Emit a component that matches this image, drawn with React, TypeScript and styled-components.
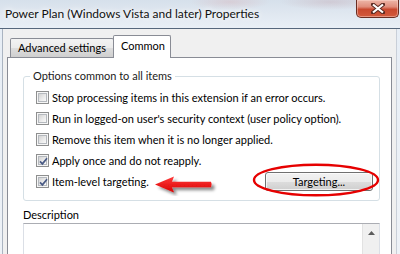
import styled, { createGlobalStyle } from 'styled-components';

const GlobalStyle = createGlobalStyle`
  html, body {
    margin: 0;
    padding: 0;
    background: #e9eef4;
  }
`;

const Window = styled.div`
  width: 400px;
  height: 254px;
  overflow: hidden;
  display: flex;
  flex-direction: column;
  font-family: Lato, 'Noto Sans', sans-serif;
  font-size: 11px;
  color: #000;
  background: linear-gradient(#e6edf5, #eef2f7);
`;

const TitleBar = styled.div`
  height: 28px;
  flex-shrink: 0;
  display: flex;
  align-items: flex-start;
  justify-content: space-between;
  background:
    radial-gradient(ellipse 40px 8px at 230px 2px, rgba(214, 170, 175, 0.35), transparent),
    radial-gradient(ellipse 50px 8px at 330px 2px, rgba(190, 150, 160, 0.3), transparent),
    linear-gradient(#d6e0eb 0%, #dfe7f0 45%, #e9eff6 100%);
  border-bottom: 1px solid #56677c;
`;

const Title = styled.div`
  padding: 6px 0 0 5px;
  font-size: 12px;
  color: #111;
  text-shadow: 0 0 5px #fff, 0 0 8px #fff;
  white-space: nowrap;
`;

const CloseButton = styled.div`
  width: 43px;
  height: 18px;
  margin-right: 1px;
  box-sizing: border-box;
  border: 1px solid #6a2d22;
  border-top: none;
  border-radius: 0 0 5px 5px;
  background: linear-gradient(#edb6a8 0%, #e08d7b 40%, #c9492f 55%, #d35a3d 100%);
  box-shadow: inset 0 0 0 1px rgba(255, 220, 210, 0.45);
  display: flex;
  align-items: center;
  justify-content: center;
`;

const Body = styled.div`
  flex: 1;
  min-height: 0;
  display: flex;
  flex-direction: column;
  background: #f0f0f0;
  margin: 0 3px 0 2px;
  border-left: 1px solid #aab4c1;
  border-right: 1px solid #c9cfd8;
  padding: 6px 4px 0 4px;
`;

const TabStrip = styled.div`
  height: 23px;
  display: flex;
  align-items: flex-end;
  padding-left: 3px;
`;

const Tab = styled.div<{ $active?: boolean }>`
  box-sizing: border-box;
  height: ${p => (p.$active ? '23px' : '19px')};
  margin-bottom: ${p => (p.$active ? '0' : '1px')};
  margin-left: ${p => (p.$active ? '-1px' : '0')};
  padding: ${p => (p.$active ? '2px 5px 0 7px' : '0 7px 0 7px')};
  border: 1px solid #898c95;
  border-bottom: none;
  border-radius: 2px 2px 0 0;
  background: ${p =>
    p.$active ? '#fff' : 'linear-gradient(#f3f3f3 0%, #ebebeb 50%, #dddddd 51%, #cfcfcf 100%)'};
  position: relative;
  z-index: ${p => (p.$active ? 2 : 1)};
  display: flex;
  align-items: ${p => (p.$active ? 'flex-start' : 'center')};
  line-height: 16px;
  white-space: nowrap;
`;

const Panel = styled.div`
  flex: 1;
  min-height: 0;
  margin-top: -1px;
  background: #fff;
  border: 1px solid #898c95;
  border-bottom: none;
  padding: 11px 11px 0 15px;
  display: flex;
  flex-direction: column;
`;

const GroupBox = styled.fieldset`
  margin: 0;
  padding: 4px 6px 8px 12px;
  border: 1px solid #d5dfe5;
  border-radius: 3px;
  min-width: 0;
`;

const Legend = styled.legend`
  margin-left: -6px;
  padding: 0 3px;
  line-height: 14px;
  color: #1b1b1b;
`;

const Row = styled.div`
  height: 21px;
  display: flex;
  align-items: center;
  gap: 3px;
  white-space: nowrap;
`;

const CheckBox = styled.span`
  width: 13px;
  height: 13px;
  flex-shrink: 0;
  box-sizing: border-box;
  border: 1px solid #8e8f8f;
  background: #f6f6f6;
  position: relative;
  &::before {
    content: '';
    position: absolute;
    inset: 1px;
    border: 1px solid #b5b9be;
    background: linear-gradient(135deg, #d3d3d3 0%, #eaeaea 55%, #f9f9f9 100%);
  }
  svg {
    position: absolute;
    inset: 0;
    z-index: 1;
  }
`;

const Label = styled.span`
  line-height: 16px;
`;

const Pointer = styled.svg`
  flex-shrink: 0;
  margin-left: 1px;
`;

const ButtonWrap = styled.div`
  margin-left: auto;
  position: relative;
`;

const PushButton = styled.button`
  width: 108px;
  height: 19px;
  box-sizing: border-box;
  border: 1px solid #707070;
  border-radius: 3px;
  background: linear-gradient(#f2f2f2 0%, #ebebeb 50%, #dddddd 51%, #cfcfcf 100%);
  box-shadow: inset 0 0 0 1px rgba(255, 255, 255, 0.7);
  font-family: inherit;
  font-size: 11px;
  color: #000;
  padding: 0;
  line-height: 15px;
`;

const Ring = styled.svg`
  position: absolute;
  left: -13px;
  top: -9px;
  pointer-events: none;
`;

const Caption = styled.div`
  margin-top: 6px;
  line-height: 16px;
  padding-left: 0;
`;

const TextArea = styled.div`
  margin-right: 0;
  height: 60px;
  flex-shrink: 0;
  border: 1px solid #dbdfe6;
  border-top-color: #abadb3;
  display: flex;
  justify-content: flex-end;
`;

const ScrollBar = styled.div`
  width: 16px;
  background: #f0f0f0;
  border-left: 1px solid #e2e2e2;
  display: flex;
  justify-content: center;
  padding-top: 7px;
`;

function Check({ checked }: { checked?: boolean }) {
  return (
    <CheckBox>
      {checked && (
        <svg width="13" height="13" viewBox="0 0 13 13">
          <path d="M3 6.4 L5.4 8.9 L10 3.3" fill="none" stroke="#4a5b85" strokeWidth="1.7" />
        </svg>
      )}
    </CheckBox>
  );
}

const options = [
  { text: 'Stop processing items in this extension if an error occurs.', checked: false },
  { text: "Run in logged-on user's security context (user policy option).", checked: false },
  { text: 'Remove this item when it is no longer applied.', checked: false },
  { text: 'Apply once and do not reapply.', checked: true },
];

export default function App() {
  return (
    <>
      <GlobalStyle />
      <Window>
        <TitleBar>
          <Title>Power Plan (Windows Vista and later) Properties</Title>
          <CloseButton>
            <svg width="14" height="11" viewBox="0 0 14 11">
              <path
                d="M2 1.5 L12 9.5 M12 1.5 L2 9.5"
                stroke="#5a2a22"
                strokeWidth="4"
                strokeLinecap="square"
              />
              <path d="M2 1.5 L12 9.5 M12 1.5 L2 9.5" stroke="#fff" strokeWidth="2.2" />
            </svg>
          </CloseButton>
        </TitleBar>
        <Body>
          <TabStrip>
            <Tab>Advanced settings</Tab>
            <Tab $active>Common</Tab>
          </TabStrip>
          <Panel>
            <GroupBox>
              <Legend>Options common to all items</Legend>
              {options.map(o => (
                <Row key={o.text}>
                  <Check checked={o.checked} />
                  <Label>{o.text}</Label>
                </Row>
              ))}
              <Row>
                <Check checked />
                <Label>Item-level targeting.</Label>
                <Pointer width="66" height="28" viewBox="0 0 66 28">
                  <defs>
                    <linearGradient id="arrowFill" x1="0" y1="0" x2="0" y2="1">
                      <stop offset="0" stopColor="#ff3b3b" />
                      <stop offset="1" stopColor="#d90000" />
                    </linearGradient>
                    <filter id="arrowShadow" x="-20%" y="-40%" width="140%" height="200%">
                      <feDropShadow dx="3" dy="3" stdDeviation="1.6" floodColor="#000" floodOpacity="0.45" />
                    </filter>
                  </defs>
                  <path
                    d="M2 16.5 L21 8.5 L19 13.8 L58 13.8 Q59.5 16.5 58 19.2 L19 19.2 L21 24.5 Z"
                    fill="url(#arrowFill)"
                    filter="url(#arrowShadow)"
                  />
                </Pointer>
                <ButtonWrap>
                  <PushButton>Targeting...</PushButton>
                  <Ring width="128" height="34" viewBox="0 0 128 34">
                    <ellipse cx="64" cy="17" rx="62" ry="15.3" fill="none" stroke="#e60000" strokeWidth="2.4" />
                  </Ring>
                </ButtonWrap>
              </Row>
            </GroupBox>
            <Caption>Description</Caption>
            <TextArea>
              <ScrollBar>
                <svg width="7" height="4" viewBox="0 0 7 4">
                  <path d="M0 4 L3.5 0 L7 4 Z" fill="#5c5c5c" />
                </svg>
              </ScrollBar>
            </TextArea>
          </Panel>
        </Body>
      </Window>
    </>
  );
}
